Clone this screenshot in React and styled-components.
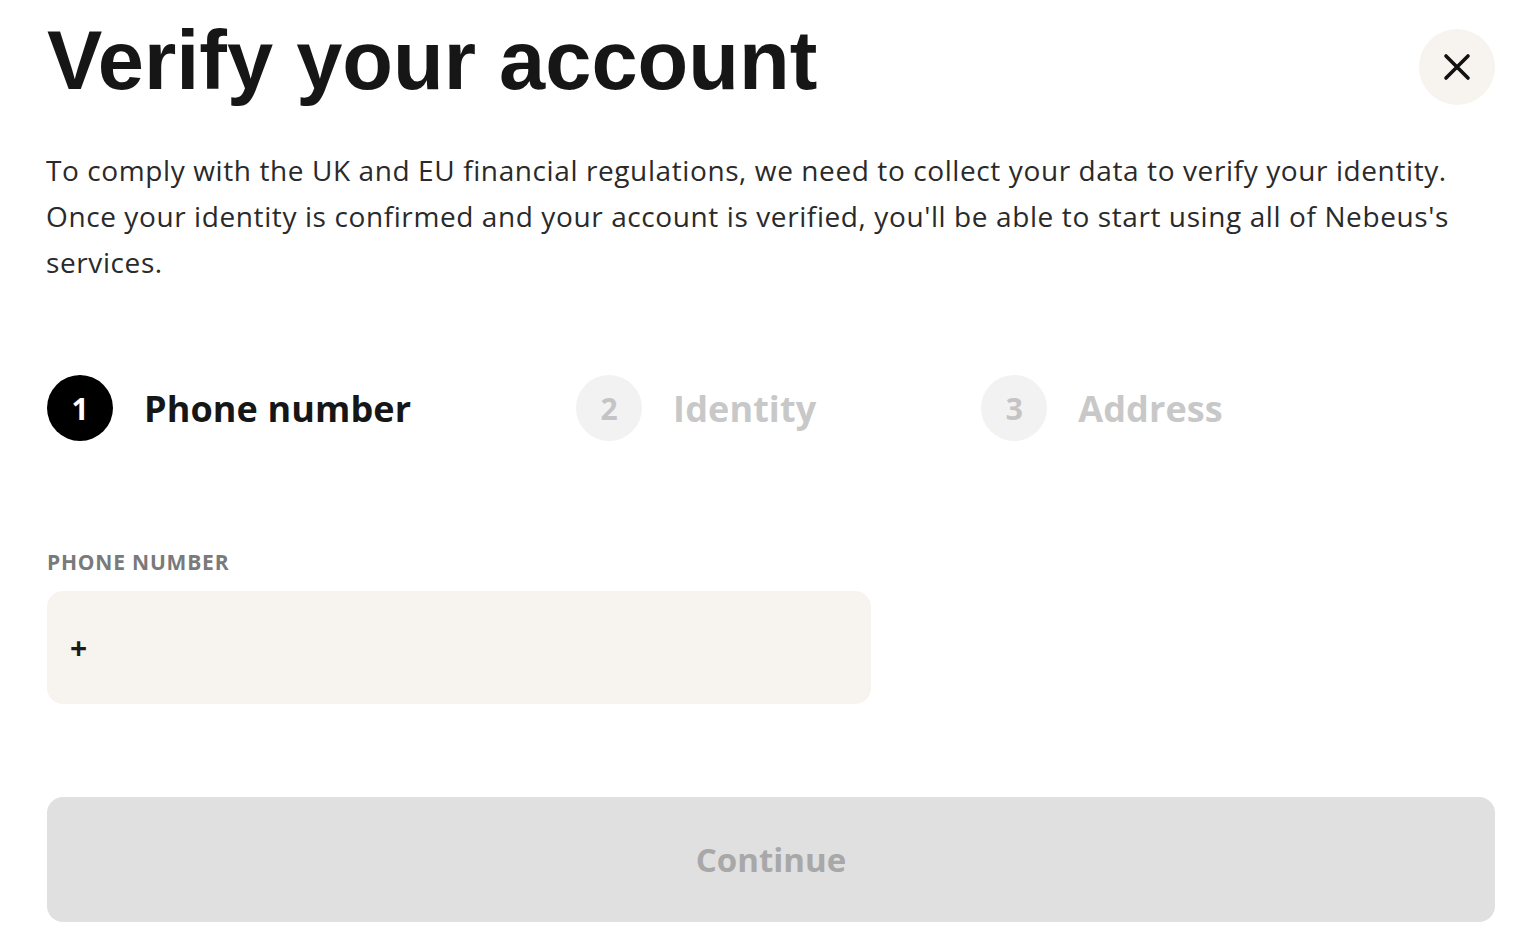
import styled, { createGlobalStyle } from 'styled-components'

const Global = createGlobalStyle`
   body{
      margin: 0;
      background: #ffffff;
      font-family: "Open Sans", "Noto Sans", sans-serif;
   }
`

const Modal = styled.div`
   &{
      padding: 12px 33px 0 47px;
      display: flex;
      flex-direction: column;
   }
`

const Header = styled.div`
   display: flex;
   justify-content: space-between;
   align-items: flex-start;
`

const Title = styled.h1`
   margin: 0;
   font-family: "Liberation Sans", Arial, sans-serif;
   font-weight: 700;
   font-size: 83px;
   line-height: 98px;
   color: #161616;
`

const CloseButton = styled.button`
   width: 76px;
   height: 76px;
   margin-top: 17px;
   border: none;
   border-radius: 50%;
   background: #f7f3ee;
   display: flex;
   align-items: center;
   justify-content: center;
   padding: 0;
   cursor: pointer;
`

const Intro = styled.p`
   margin: 37px 0 0 -1px;
   font-size: 28px;
   line-height: 46px;
   letter-spacing: 0.6px;
   color: #2a2a2a;
   max-width: 1460px;
`

const Steps = styled.div`
   display: flex;
   align-items: center;
   gap: 165px;
   margin-top: 90px;
`

const Step = styled.div`
   display: flex;
   align-items: center;
   gap: 31px;
`

const StepNum = styled.span`
   width: 66px;
   height: 66px;
   border-radius: 50%;
   display: flex;
   align-items: center;
   justify-content: center;
   font-size: 30px;
   font-weight: 700;
   background: ${p => p.$active ? '#000000' : '#f2f2f2'};
   color: ${p => p.$active ? '#ffffff' : '#c4c4c4'};
`

const StepLabel = styled.span`
   font-size: 36px;
   font-weight: 700;
   letter-spacing: 0.1px;
   color: ${p => p.$active ? '#161616' : '#c8c8c8'};
`

const Field = styled.div`
   display: flex;
   flex-direction: column;
   margin-top: 107px;
   width: 824px;
`

const Label = styled.label`
   font-size: 21px;
   font-weight: 700;
   text-transform: uppercase;
   color: #7a7a7a;
   letter-spacing: 0.8px;
   line-height: 28px;
`

const Input = styled.div`
   margin-top: 15px;
   height: 113px;
   border-radius: 16px;
   background: #f7f3ee;
   display: flex;
   align-items: center;
   padding-left: 23px;
   font-size: 30px;
   font-weight: 700;
   color: #1a1a1a;
`

const Continue = styled.button`
   margin-top: 93px;
   height: 125px;
   border: none;
   border-radius: 16px;
   background: #e0e0e0;
   color: #a8a8a8;
   font-family: "Open Sans", "Noto Sans", sans-serif;
   font-size: 33px;
   font-weight: 700;
   padding: 0;
`

const steps = [
   { n: 1, label: 'Phone number', active: true },
   { n: 2, label: 'Identity' },
   { n: 3, label: 'Address' },
]

export default function App(){
   return(
      <>
         <Global/>
         <Modal>
            <Header>
               <Title>Verify your account</Title>
               <CloseButton aria-label="Close">
                  <svg width="28" height="28" viewBox="0 0 28 28">
                     <path d="M3 3 L25 25 M25 3 L3 25" stroke="#111" strokeWidth="3.6" strokeLinecap="round"/>
                  </svg>
               </CloseButton>
            </Header>

            <Intro>
               To comply with the UK and EU financial regulations, we need to collect your data to verify your identity. Once your identity is confirmed and your account is verified, you'll be able to start using all of Nebeus's services.
            </Intro>

            <Steps>
               {steps.map(s => (
                  <Step key={s.n}>
                     <StepNum $active={s.active}>{s.n}</StepNum>
                     <StepLabel $active={s.active}>{s.label}</StepLabel>
                  </Step>
               ))}
            </Steps>

            <Field>
               <Label>Phone number</Label>
               <Input>+</Input>
            </Field>

            <Continue disabled>Continue</Continue>
         </Modal>
      </>
   )
}
